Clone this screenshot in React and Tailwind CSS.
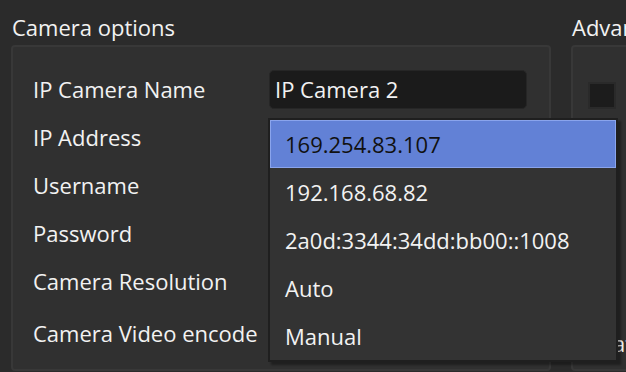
const labels = [
    "IP Camera Name",
    "IP Address",
    "Username",
    "Password",
    "Camera Resolution",
];

const options = [
    "169.254.83.107",
    "192.168.68.82",
    "2a0d:3344:34dd:bb00::1008",
    "Auto",
    "Manual",
];

export default function App() {
    return (
        <div className="relative w-[626px] h-[372px] overflow-hidden bg-[#2b2b2b] text-[#f2f2f2] font-['Open_Sans',sans-serif] text-[22px]">
            <div className="flex gap-[20px] pl-[11px] pt-[12px]">
                <div className="w-[540px] shrink-0">
                    <div className="h-[30px] pl-[1px] leading-[30px]">Camera options</div>
                    <div className="mt-[3px] h-[326px] rounded-[4px] border-2 border-[#383838] bg-[#303030] pl-[20px] pt-[18px]">
                        {labels.map((label, i) => (
                            <div key={label} className="flex h-[48px] items-center">
                                <div className="w-[236px] shrink-0">{label}</div>
                                {i === 0 && (
                                    <div className="flex h-[39px] w-[258px] items-center rounded-[5px] border border-[#262626] bg-[#1b1b1b] pl-[5px]">
                                        IP Camera 2
                                    </div>
                                )}
                            </div>
                        ))}
                        <div className="mt-[4px] flex h-[48px] items-center">
                            <div className="w-[236px] shrink-0 whitespace-nowrap">Camera Video encode</div>
                        </div>
                    </div>
                </div>
                <div className="w-[200px] shrink-0">
                    <div className="h-[30px] pl-[1px] leading-[30px]">Advanced</div>
                    <div className="mt-[3px] h-[326px] rounded-[4px] border-2 border-[#383838] bg-[#303030] pl-[15px] pt-[35px]">
                        <div className="h-[27px] w-[28px] border-2 border-[#2a2a2a] bg-[#1c1c1c]" />
                        <div className="mt-[218px] pl-[9px]">Data stream</div>
                    </div>
                </div>
            </div>

            {/* open IP address list */}
            <div className="absolute left-[268px] top-[118px] w-[350px] border-2 border-[#1f1f1f] bg-[#333333] shadow-[3px_3px_2px_rgba(0,0,0,0.35)]">
                {options.map((opt, i) => (
                    <div
                        key={opt}
                        className={
                            i === 0
                                ? "flex h-[48px] items-center border border-[#8aa4ec] bg-[#6281d6] pl-[14px] text-[#111111]"
                                : "flex h-[48px] items-center pl-[15px]"
                        }
                    >
                        {opt}
                    </div>
                ))}
            </div>
        </div>
    );
}
